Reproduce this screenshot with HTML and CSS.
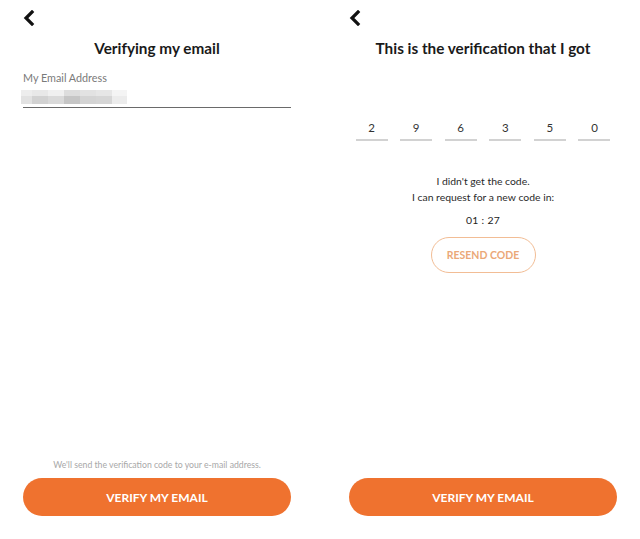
FILE: index.html
```html
<!DOCTYPE html>
<html>
<head>
<meta charset="utf-8">
<link rel="stylesheet" href="styles.css">
</head>
<body>
<div class="screen">
  <div class="top">
    <svg class="back" width="12" height="16" viewBox="0 0 12 16"><path d="M9 2 L3 8 L9 14" fill="none" stroke="#111" stroke-width="3.2" stroke-linecap="square"/></svg>
  </div>
  <h1 class="title">Verifying my email</h1>
  <div class="field">
    <div class="label">My Email Address</div>
    <div class="value">
      <span class="px p1"></span><span class="px p2"></span><span class="px p3"></span><span class="px p4"></span><span class="px p5"></span><span class="px p6"></span><span class="px p7"></span>
    </div>
  </div>
  <div class="spacer"></div>
  <p class="hint">We'll send the verification code to your e-mail address.</p>
  <button class="primary">VERIFY MY EMAIL</button>
</div>
<div class="screen">
  <div class="top">
    <svg class="back" width="12" height="16" viewBox="0 0 12 16"><path d="M9 2 L3 8 L9 14" fill="none" stroke="#111" stroke-width="3.2" stroke-linecap="square"/></svg>
  </div>
  <h1 class="title">This is the verification that I got</h1>
  <div class="code">
    <span class="digit">2</span><span class="digit">9</span><span class="digit">6</span><span class="digit">3</span><span class="digit">5</span><span class="digit">0</span>
  </div>
  <p class="info">I didn't get the code.<br>I can request for a new code in:</p>
  <p class="timer">01 : 27</p>
  <div class="resend-row"><button class="resend">RESEND CODE</button></div>
  <div class="spacer"></div>
  <button class="primary">VERIFY MY EMAIL</button>
</div>
</body>
</html>
```
FILE: styles.css
```css
html, body {
  margin: 0;
  padding: 0;
  background: #fff;
}
body {
  display: flex;
  gap: 12px;
  width: 640px;
  height: 539px;
  font-family: Lato, "Open Sans", sans-serif;
  color: #222;
}
.screen {
  width: 314px;
  height: 539px;
  display: flex;
  flex-direction: column;
  box-sizing: border-box;
  padding: 0 23px 23px;
}
.top {
  height: 30px;
  padding-top: 10px;
  box-sizing: border-box;
}
.back {
  display: block;
}
.title {
  margin: 8px 0 0;
  font-size: 15.3px;
  line-height: 20px;
  font-weight: 700;
  text-align: center;
  color: #1a1a1a;
}
.field {
  margin-top: 13px;
}
.label {
  font-size: 10.8px;
  line-height: 14px;
  color: #7a7a7a;
}
.value {
  display: flex;
  height: 14px;
  margin-top: 5px;
  margin-left: -2px;
}
.field::after {
  content: "";
  display: block;
  height: 1px;
  margin-top: 3px;
  background: #6a6a6a;
}
.px { display: block; height: 14px; }
.p1 { width: 11px; background: linear-gradient(#ededed 40%, #e2e2e2 40%); }
.p2 { width: 16px; background: linear-gradient(#e8e8e8 40%, #d2d2d2 40%); }
.p3 { width: 16px; background: linear-gradient(#f0f0f0 40%, #dadada 40%); }
.p4 { width: 16px; background: linear-gradient(#dddddd 40%, #c6c6c6 40%); }
.p5 { width: 16px; background: linear-gradient(#e2e2e2 40%, #d4d4d4 40%); }
.p6 { width: 16px; background: linear-gradient(#e6e6e6 40%, #d6d6d6 40%); }
.p7 { width: 15px; background: linear-gradient(#f4f4f4 40%, #ececec 40%); }
.spacer { flex: 1; }
.hint {
  margin: 0 0 7px;
  font-size: 8.7px;
  line-height: 12px;
  color: #a8a8a8;
  text-align: center;
}
.primary {
  display: block;
  width: 268px;
  height: 38px;
  border: 0;
  border-radius: 19px;
  background: #ef722f;
  color: #fff;
  font-family: Lato, sans-serif;
  font-weight: 700;
  font-size: 12px;
  padding: 0;
}
.code {
  display: flex;
  justify-content: center;
  gap: 12.6px;
  margin-top: 63px;
}
.digit {
  width: 32px;
  text-align: center;
  font-size: 11.5px;
  line-height: 14px;
  padding-bottom: 4px;
  border-bottom: 2px solid #d2d2d2;
  color: #333;
}
.info {
  margin: 32px 0 0;
  font-size: 10.4px;
  line-height: 16px;
  text-align: center;
  color: #2a2a2a;
}
.timer {
  margin: 8px 0 0;
  font-size: 10.4px;
  line-height: 14px;
  text-align: center;
  color: #222;
  letter-spacing: 0.3px;
}
.resend-row {
  display: flex;
  justify-content: center;
  margin-top: 10px;
}
.resend {
  width: 105px;
  height: 36px;
  border: 1.5px solid #f2bd95;
  border-radius: 18px;
  background: #fff;
  color: #eba878;
  font-family: Lato, sans-serif;
  font-weight: 700;
  font-size: 10.5px;
  padding: 0;
}
```
